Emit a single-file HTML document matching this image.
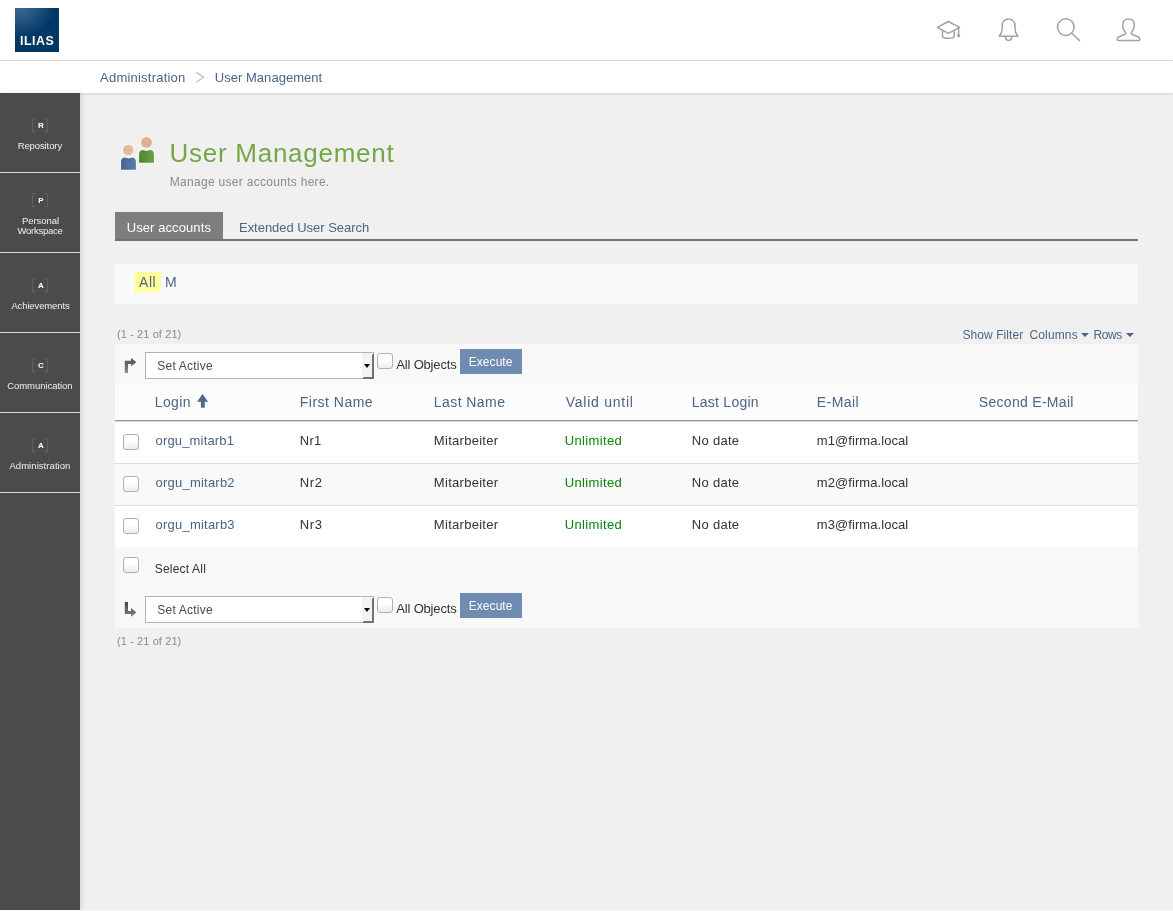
<!DOCTYPE html>
<html lang="en"><head><meta charset="utf-8"><title>User Management</title>
<style>
html,body{margin:0;padding:0}
body{width:1173px;height:911px;position:relative;overflow:hidden;background:#f0f0f0;font-family:"Liberation Sans",sans-serif}
.a{position:absolute}
.tl{position:absolute;left:0;top:0;width:1173px;height:911px;will-change:transform}
.t{position:absolute;white-space:nowrap;line-height:20px;height:20px;font-family:"Liberation Sans",sans-serif}
#hdr{left:0;top:0;width:1173px;height:60px;background:#fff;border-bottom:1px solid #dddddd}
#bc{left:0;top:61px;width:1173px;height:32px;background:#fff;box-shadow:0 1px 3px rgba(0,0,0,.13)}
#logo{left:15px;top:8px;width:44px;height:44px;background:#003865;overflow:hidden}
#logo i{position:absolute;left:-30px;top:-34px;width:70px;height:64px;border-radius:50%;background:radial-gradient(closest-side,rgba(120,150,190,.55),rgba(120,150,190,0))}
#logot{will-change:transform;position:absolute;left:20.3px;top:33.5px;font-weight:bold;font-size:12.4px;line-height:14px;color:#fff;letter-spacing:.55px}
#side{left:0;top:93px;width:80px;height:817px;background:#4b4b4b;box-shadow:2px 0 4px rgba(0,0,0,.11)}
.sep{position:absolute;left:0;width:80px;height:1px;background:#dcdcdc}
.brk{will-change:transform;position:absolute;left:32px;width:16px;height:14px}
.brk b{position:absolute;left:0.9px;top:0.6px;width:16px;text-align:center;font-size:8px;line-height:14px;color:#fff;font-weight:bold}
.brk:before,.brk:after{content:"";position:absolute;top:0;width:3px;height:12px;border:1px solid #5f5f5f}
.brk:before{left:0;border-right:none}
.brk:after{right:0;border-left:none}
#tabA{left:115px;top:212px;width:108px;height:28px;background:#7e7e7e}
#tabL{left:115px;top:239px;width:1023px;height:2px;background:#727272}
#letters{left:115px;top:264px;width:1023px;height:40px;background:#f9f9f9}
#hl{left:134px;top:272px;width:27px;height:20px;background:#ffff9d}
#act1{left:115px;top:344px;width:1023px;height:40px;background:#f8f8f8}
#thead{left:115px;top:384px;width:1023px;height:36px;background:#fcfcfc;border-bottom:1px solid #949494}
.row{position:absolute;left:115px;width:1023px;height:41px;border-top:1px solid #dddddd;background:#fff}
.row.alt{background:#f9f9f9}
#foot{left:115px;top:547px;width:1023px;height:81px;background:#f8f8f8}
.cb{position:absolute;width:14px;height:14px;border:1px solid #b9aeaa;border-radius:3px;background:linear-gradient(#ffffff 40%,#ececec)}
.sel{position:absolute;left:145px;width:227px;height:25px;border:1px solid #b4b4b4;background:#fff}
.sel i{position:absolute;right:-1px;top:0;width:12px;height:26px;background:#f4f3f1;border:2.5px solid;border-color:#f4f3f1 #727272 #727272 #f4f3f1;box-sizing:border-box}
.sel i:after{content:"";position:absolute;left:0.2px;top:9px;border:3.2px solid transparent;border-top:4px solid #000;border-bottom:none}
.btn{position:absolute;left:460px;width:62px;height:25px;background:#6f8bb1}
.caret{position:absolute;width:0;height:0;border:4px solid transparent;border-top:4.4px solid #4c6586;border-bottom:none}
#bot{left:0;top:910px;width:1173px;height:1px;background:#f6f6f6}

</style></head>
<body>
<div class="a" id="hdr"></div>
<div class="a" id="logo"><i></i></div><div class="a" id="logot">ILIAS</div>
<svg class="a" style="left:926px;top:8px" width="230" height="44" viewBox="926 8 230 44" fill="none" stroke="#a2a2a2" stroke-width="1.5" stroke-linejoin="round" stroke-linecap="round">
 <path d="M948.3 21.5 L937.4 27.4 L948.3 33.3 L959.6 27.4 Z"/>
 <path d="M942.5 30.2 V37 C944.5 38.8 952 38.8 954.1 37 V30.2"/>
 <path d="M958.6 28 V34.6"/><circle cx="958.6" cy="35.6" r="0.9" fill="#a6a6a6"/>
 <path d="M999.3 36.3 H1017.9 C1015.6 33.4 1015 31.6 1015 28.6 V25.4 C1015 21.6 1012.2 18.9 1008.6 18.9 C1005 18.9 1002.2 21.6 1002.2 25.4 V28.6 C1002.2 31.6 1001.6 33.4 999.3 36.3 Z"/>
 <path d="M1005.4 36.6 C1005.4 41.8 1011.8 41.8 1011.8 36.6"/>
 <circle cx="1065.8" cy="27.1" r="8.3"/><path d="M1071.8 33.2 L1079.6 40.6"/>
 <path d="M1128.5 19 C1124.8 19 1122.8 21.3 1122.8 24.8 C1122.7 28.2 1123.6 30.6 1125.6 32.4 C1126 33.4 1125.6 34 1124.4 34.5 L1118.6 37 C1117.4 37.6 1117.2 38.2 1117.2 39.4 C1117.2 40.3 1117.6 40.6 1118.6 40.6 H1138.4 C1139.4 40.6 1139.8 40.3 1139.8 39.4 C1139.8 38.2 1139.6 37.6 1138.4 37 L1132.6 34.5 C1131.4 34 1131 33.4 1131.4 32.4 C1133.4 30.6 1134.3 28.2 1134.3 24.8 C1134.3 21.3 1132.2 19 1128.5 19 Z"/>
</svg>
<div class="a" id="bc"></div>
<svg class="a" style="left:194px;top:70px" width="12" height="15" viewBox="194 70 12 15" fill="none" stroke="#b8b8b8" stroke-width="1.1"><path d="M196.3 72.2 L203.6 77.3 L196.3 82.4"/></svg>
<div class="a" id="side">
 <div class="sep" style="top:79px"></div><div class="sep" style="top:159px"></div><div class="sep" style="top:239px"></div><div class="sep" style="top:319px"></div><div class="sep" style="top:399px"></div>
 <div class="brk" style="top:25px"><b>R</b></div>
 <div class="brk" style="top:100px"><b>P</b></div>
 <div class="brk" style="top:185px"><b>A</b></div>
 <div class="brk" style="top:265px"><b>C</b></div>
 <div class="brk" style="top:345px"><b>A</b></div>
</div>
<svg class="a" style="left:118px;top:134px" width="40" height="40" viewBox="118 134 40 40">
 <defs>
  <linearGradient id="gb" x1="0" x2="1"><stop offset="0" stop-color="#47638b"/><stop offset="1" stop-color="#5c7ca7"/></linearGradient>
  <linearGradient id="gg" x1="0" x2="1"><stop offset="0" stop-color="#4c8535"/><stop offset="1" stop-color="#6da23e"/></linearGradient>
  <linearGradient id="gh" x1="0" x2="1"><stop offset="0" stop-color="#deb294"/><stop offset="1" stop-color="#e9c3a3"/></linearGradient>
 </defs>
 <g stroke="#f9f9f9" stroke-width="1.4" paint-order="stroke" stroke-linejoin="round">
 <circle cx="146.5" cy="142.4" r="5.4" fill="#dcb193"/>
 <path d="M139.1 162.7 V154 C139.1 151.5 141 150 143 150 L146.5 151 L150 150 C152 150 154 151.5 154 154 V162.7 Z" fill="url(#gg)"/>
 <circle cx="128.4" cy="150" r="5.3" fill="url(#gh)"/>
 <path d="M121 169.8 V161.4 C121 158.9 123 157.4 125 157.4 L128.4 158.4 L132 157.4 C134 157.4 135.9 158.9 135.9 161.4 V169.8 Z" fill="url(#gb)"/>
 </g>
</svg>
<div class="a" id="tabA"></div><div class="a" id="tabL"></div>
<div class="a" id="letters"></div><div class="a" id="hl"></div>
<div class="caret" style="left:1081.2px;top:333px"></div><div class="caret" style="left:1125.8px;top:333px"></div>
<div class="a" id="act1"></div>
<div class="a" id="thead"></div>
<div class="row" style="top:421px;border-top-color:#d6d6d6"></div><div class="row alt" style="top:463px"></div><div class="row" style="top:505px"></div>
<div class="a" id="foot"></div>
<div class="cb" style="left:123px;top:434px"></div><div class="cb" style="left:123px;top:476px"></div><div class="cb" style="left:123px;top:518px"></div><div class="cb" style="left:123px;top:557px"></div>
<div class="cb" style="left:377px;top:353px"></div><div class="cb" style="left:377px;top:597px"></div>
<div class="sel" style="top:352px"><i></i></div><div class="sel" style="top:596px"><i></i></div>
<div class="btn" style="top:349px"></div><div class="btn" style="top:593px"></div>
<svg class="a" style="left:123px;top:357px" width="16" height="18" viewBox="123 357 16 18"><defs><linearGradient id="ga" x1="0" y1="0" x2="0" y2="1"><stop offset="0" stop-color="#4e4e4e"/><stop offset="1" stop-color="#8c8c8c"/></linearGradient></defs><path d="M124.8 373 V360.8 H131.1 V358.1 L136.4 362.2 L131.1 366.3 V364 H128 V373 Z" fill="url(#ga)"/></svg>
<svg class="a" style="left:123px;top:601px" width="16" height="18" viewBox="123 601 16 18"><defs><linearGradient id="gc" x1="0" y1="0" x2="0" y2="1"><stop offset="0" stop-color="#444444"/><stop offset="1" stop-color="#808080"/></linearGradient></defs><path d="M124.8 602.1 H128 V610.9 H131.1 V608 L136.4 612.4 L131.1 616.8 V614 H124.8 Z" fill="url(#gc)"/></svg>
<svg class="a" style="left:196px;top:394px" width="14" height="15" viewBox="196 394 14 15"><path d="M202.55 394 L208.1 401.8 H204.75 V407.8 H200.9 V401.8 H197 Z" fill="#4f6a8e"/></svg>
<div class="a" id="bot"></div>

<div class="tl">
<span class="t " style="left:100.10px;top:67.50px;font-size:13px;color:#4c6586;letter-spacing:0.215px;">Administration</span>
<span class="t " style="left:214.80px;top:67.50px;font-size:13px;color:#4c6586;letter-spacing:0.029px;">User Management</span>
<span class="t " style="left:169.60px;top:142.99px;font-size:26px;color:#76a646;letter-spacing:0.729px;">User Management</span>
<span class="t " style="left:169.80px;top:171.84px;font-size:12px;color:#8a8a8a;letter-spacing:0.292px;">Manage user accounts here.</span>
<span class="t " style="left:126.70px;top:217.50px;font-size:13px;color:#ffffff;letter-spacing:0.092px;">User accounts</span>
<span class="t " style="left:239.00px;top:217.50px;font-size:13px;color:#4c6586;letter-spacing:-0.032px;">Extended User Search</span>
<span class="t " style="left:139.10px;top:272.15px;font-size:14px;color:#4c6586;letter-spacing:0.450px;">All</span>
<span class="t " style="left:165.00px;top:272.15px;font-size:14px;color:#4c6586;letter-spacing:0.600px;">M</span>
<span class="t " style="left:117.00px;top:324.19px;font-size:11px;color:#8a8a8a;letter-spacing:0.100px;">(1 - 21 of 21)</span>
<span class="t " style="left:117.00px;top:631.19px;font-size:11px;color:#8a8a8a;letter-spacing:0.100px;">(1 - 21 of 21)</span>
<span class="t " style="left:962.40px;top:324.84px;font-size:12px;color:#4c6586;letter-spacing:0.090px;">Show Filter</span>
<span class="t " style="left:1029.50px;top:324.84px;font-size:12px;color:#4c6586;letter-spacing:0.133px;">Columns</span>
<span class="t " style="left:1093.60px;top:324.84px;font-size:12px;color:#4c6586;letter-spacing:-0.467px;">Rows</span>
<span class="t " style="left:157.30px;top:355.84px;font-size:12px;color:#4a4a4a;letter-spacing:0.222px;">Set Active</span>
<span class="t " style="left:396.30px;top:354.50px;font-size:13px;color:#333333;letter-spacing:-0.180px;">All Objects</span>
<span class="t " style="left:468.70px;top:351.84px;font-size:12px;color:#ffffff;letter-spacing:0.067px;">Execute</span>
<span class="t " style="left:157.30px;top:599.84px;font-size:12px;color:#4a4a4a;letter-spacing:0.222px;">Set Active</span>
<span class="t " style="left:396.30px;top:598.50px;font-size:13px;color:#333333;letter-spacing:-0.180px;">All Objects</span>
<span class="t " style="left:468.70px;top:595.84px;font-size:12px;color:#ffffff;letter-spacing:0.067px;">Execute</span>
<span class="t " style="left:154.80px;top:392.15px;font-size:14px;color:#4c6586;letter-spacing:0.350px;">Login</span>
<span class="t " style="left:299.80px;top:392.15px;font-size:14px;color:#4c6586;letter-spacing:0.489px;">First Name</span>
<span class="t " style="left:433.85px;top:392.15px;font-size:14px;color:#4c6586;letter-spacing:0.425px;">Last Name</span>
<span class="t " style="left:565.80px;top:392.15px;font-size:14px;color:#4c6586;letter-spacing:0.740px;">Valid until</span>
<span class="t " style="left:691.80px;top:392.15px;font-size:14px;color:#4c6586;letter-spacing:0.244px;">Last Login</span>
<span class="t " style="left:816.80px;top:392.15px;font-size:14px;color:#4c6586;letter-spacing:0.440px;">E-Mail</span>
<span class="t " style="left:978.80px;top:392.15px;font-size:14px;color:#4c6586;letter-spacing:0.300px;">Second E-Mail</span>
<span class="t " style="left:155.50px;top:430.50px;font-size:13px;color:#4c6586;letter-spacing:0.173px;">orgu_mitarb1</span>
<span class="t " style="left:299.80px;top:430.50px;font-size:13px;color:#333333;letter-spacing:0.250px;">Nr1</span>
<span class="t " style="left:433.85px;top:430.50px;font-size:13px;color:#333333;letter-spacing:0.285px;">Mitarbeiter</span>
<span class="t " style="left:564.80px;top:430.50px;font-size:13px;color:#0a840a;letter-spacing:0.338px;">Unlimited</span>
<span class="t " style="left:691.80px;top:430.50px;font-size:13px;color:#333333;letter-spacing:0.283px;">No date</span>
<span class="t " style="left:816.80px;top:430.50px;font-size:13px;color:#333333;letter-spacing:0.069px;">m1@firma.local</span>
<span class="t " style="left:155.50px;top:472.50px;font-size:13px;color:#4c6586;letter-spacing:0.227px;">orgu_mitarb2</span>
<span class="t " style="left:299.80px;top:472.50px;font-size:13px;color:#333333;letter-spacing:0.650px;">Nr2</span>
<span class="t " style="left:433.85px;top:472.50px;font-size:13px;color:#333333;letter-spacing:0.285px;">Mitarbeiter</span>
<span class="t " style="left:564.80px;top:472.50px;font-size:13px;color:#0a840a;letter-spacing:0.338px;">Unlimited</span>
<span class="t " style="left:691.80px;top:472.50px;font-size:13px;color:#333333;letter-spacing:0.283px;">No date</span>
<span class="t " style="left:816.80px;top:472.50px;font-size:13px;color:#333333;letter-spacing:0.069px;">m2@firma.local</span>
<span class="t " style="left:155.50px;top:514.50px;font-size:13px;color:#4c6586;letter-spacing:0.227px;">orgu_mitarb3</span>
<span class="t " style="left:299.80px;top:514.50px;font-size:13px;color:#333333;letter-spacing:0.650px;">Nr3</span>
<span class="t " style="left:433.85px;top:514.50px;font-size:13px;color:#333333;letter-spacing:0.285px;">Mitarbeiter</span>
<span class="t " style="left:564.80px;top:514.50px;font-size:13px;color:#0a840a;letter-spacing:0.338px;">Unlimited</span>
<span class="t " style="left:691.80px;top:514.50px;font-size:13px;color:#333333;letter-spacing:0.283px;">No date</span>
<span class="t " style="left:816.80px;top:514.50px;font-size:13px;color:#333333;letter-spacing:0.069px;">m3@firma.local</span>
<span class="t " style="left:154.70px;top:558.84px;font-size:12px;color:#333333;letter-spacing:0.200px;">Select All</span>
<span class="t " style="left:17.65px;top:135.71px;font-size:9.5px;color:#f0f0f0;letter-spacing:-0.100px;">Repository</span>
<span class="t " style="left:21.90px;top:210.71px;font-size:9.5px;color:#f0f0f0;letter-spacing:-0.057px;">Personal</span>
<span class="t " style="left:17.40px;top:220.71px;font-size:9.5px;color:#f0f0f0;letter-spacing:-0.250px;">Workspace</span>
<span class="t " style="left:11.40px;top:295.71px;font-size:9.5px;color:#f0f0f0;letter-spacing:-0.127px;">Achievements</span>
<span class="t " style="left:7.20px;top:375.71px;font-size:9.5px;color:#f0f0f0;letter-spacing:-0.050px;">Communication</span>
<span class="t " style="left:9.40px;top:455.71px;font-size:9.5px;color:#f0f0f0;letter-spacing:0.062px;">Administration</span>
</div>
</body></html>
